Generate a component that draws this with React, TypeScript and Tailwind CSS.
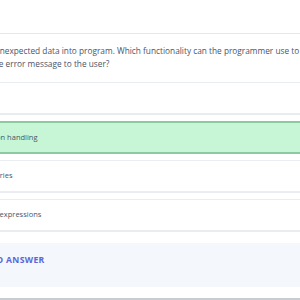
const options = [
  { label: 'Loops', correct: false },
  { label: 'Exception handling', correct: true },
  { label: 'Dictionaries', correct: false },
  { label: 'Regular expressions', correct: false },
];

export default function App() {
  return (
    <div className="w-[300px] h-[300px] overflow-hidden bg-white font-['Open_Sans',sans-serif] text-[#4a5568]">
      <div className="-ml-[200px] w-[600px] pt-[33px]">
        {/* Question */}
        <div className="border-t border-[#e2e8f0] pt-[10px] pb-[12px] pl-[132px] text-[8.3px] leading-[13px]">
          <p>
            The user enters unexpected data into program. Which functionality can the programmer use to
            <br />
            show a descriptive error message to the user?
          </p>
        </div>

        {/* Choices */}
        <div className="flex flex-col gap-[6px]">
          {options.map((o) => (
            <div
              key={o.label}
              className={
                o.correct
                  ? 'h-[33px] flex items-center pl-[171px] border-y-2 border-[#8cc9a0] bg-[#c6f6d5] text-[7.5px]'
                  : 'h-[33px] flex items-center pl-[171px] border-t border-b-2 border-[#e9edf2] bg-white text-[7.5px]'
              }
            >
              {o.label}
            </div>
          ))}
        </div>

        {/* Answer */}
        <div className="mt-[11px] h-[44px] bg-[#f4f7fb] pt-[8px] pl-[151px] leading-[12px]">
          <span className="text-[8.6px] font-bold tracking-[0.04em] text-[#5a67d8]">SUGGESTED ANSWER</span>
        </div>
        <div className="mt-[11px] border-t-2 border-[#c8ccd3]" />
      </div>
    </div>
  );
}
